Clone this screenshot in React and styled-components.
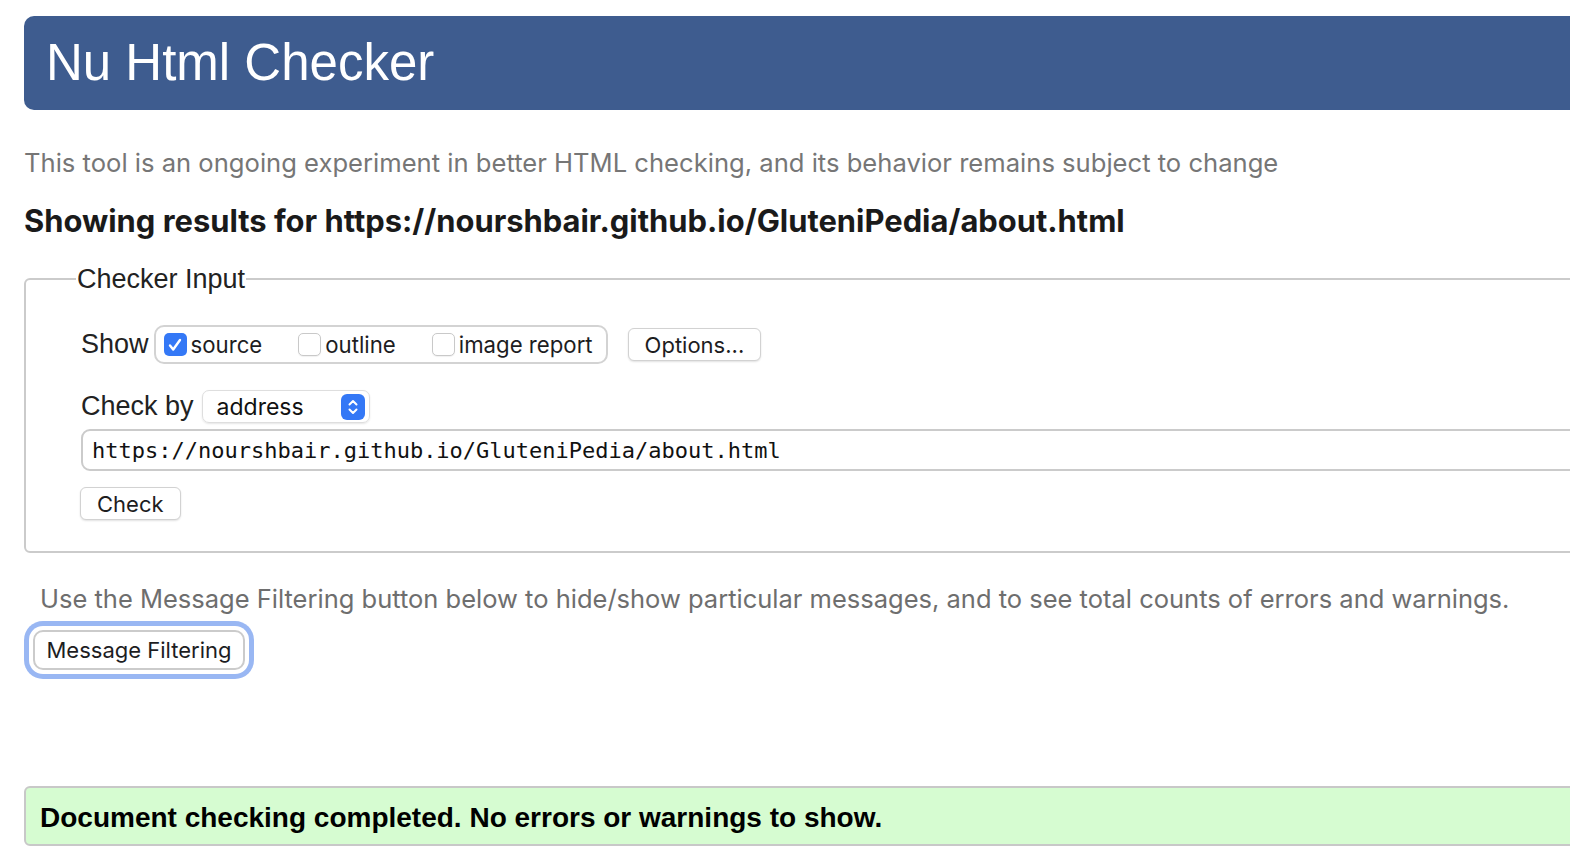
import React from "react";
import styled, { createGlobalStyle } from "styled-components";

const GlobalStyle = createGlobalStyle`
  html, body {
    margin: 0;
    padding: 0;
    background: #fff;
    overflow: hidden;
  }
  body {
    font-family: Inter, "Noto Sans", sans-serif;
    color: #1d1d1f;
  }
`;

const Page = styled.div`
  width: 1720px;
  padding: 16px 0 40px 24px;
`;

const Header = styled.h1`
  margin: 0;
  height: 94px;
  line-height: 94px;
  padding-left: 22px;
  background: #3e5c8f;
  border-radius: 10px;
  color: #fff;
  font-family: "Liberation Sans", Arial, sans-serif;
  font-weight: 400;
  font-size: 51px;
`;

const Intro = styled.p`
  margin: 38px 0 0;
  font-size: 25.6px;
  line-height: 30px;
  color: #767676;
`;

const Title = styled.h2`
  margin: 24px 0 0;
  font-size: 30.9px;
  line-height: 38px;
  font-weight: 700;
  color: #1a1a1a;
`;

const Fieldset = styled.fieldset`
  margin: 24px 0 0;
  border: 2px solid #cbcbcb;
  border-radius: 6px;
  padding: 0 0 31px 55px;
`;

const Legend = styled.legend`
  margin-left: -5px;
  padding: 0 1px;
  font-family: "Liberation Sans", Arial, sans-serif;
  font-size: 27px;
  line-height: 30px;
  color: #222;
`;

const Row = styled.div`
  display: flex;
  align-items: center;
  margin-top: ${(p) => p.$mt || 0}px;
`;

const FieldLabel = styled.span`
  font-family: "Liberation Sans", Arial, sans-serif;
  font-size: 27px;
  color: #222;
  margin-right: ${(p) => p.$mr || 8}px;
`;

const ChoiceGroup = styled.div`
  display: flex;
  align-items: center;
  gap: 36px;
  height: 39px;
  box-sizing: border-box;
  border: 2px solid #d3d3d3;
  border-radius: 10px;
  padding: 0 13px 0 8px;
`;

const Choice = styled.label`
  display: flex;
  align-items: center;
  gap: 4px;
  font-size: 22.2px;
  color: #1d1d1f;
`;

const Box = styled.span`
  display: inline-flex;
  align-items: center;
  justify-content: center;
  width: 23px;
  height: 23px;
  box-sizing: border-box;
  border-radius: 5px;
  background: ${(p) => (p.$checked ? "#3478f6" : "#fff")};
  border: ${(p) => (p.$checked ? "none" : "1px solid #c9c9c9")};
  box-shadow: ${(p) => (p.$checked ? "none" : "0 1px 1px rgba(0,0,0,0.06)")};
`;

const Button = styled.button`
  height: ${(p) => p.$h || 33}px;
  padding: 0 ${(p) => p.$px || 17}px;
  margin-left: ${(p) => p.$ml || 0}px;
  background: #fff;
  border: 1px solid #d2d2d2;
  border-radius: 6px;
  box-shadow: 0 1px 2px rgba(0, 0, 0, 0.12);
  font-family: Inter, "Noto Sans", sans-serif;
  font-size: 22px;
  color: #1d1d1f;
`;

const SelectBox = styled.div`
  display: flex;
  align-items: center;
  width: 168px;
  height: 33px;
  box-sizing: border-box;
  padding: 0 4px 0 14px;
  border: 1px solid #dedede;
  border-radius: 7px;
  box-shadow: 0 1px 2px rgba(0, 0, 0, 0.1);
  font-size: 23px;
  color: #111;
  span {
    flex: 1;
  }
`;

const UrlInput = styled.div`
  width: 1600px;
  height: 42px;
  box-sizing: border-box;
  margin-top: 6px;
  padding-left: 9px;
  display: flex;
  align-items: center;
  border: 2px solid #cbcbcb;
  border-radius: 9px;
  font-family: "DejaVu Sans Mono", "Liberation Mono", monospace;
  font-size: 22px;
  color: #111;
`;

const CheckRow = styled.div`
  margin-top: 16px;
  margin-left: -1px;
`;

const FilterNote = styled.p`
  margin: 31px 0 0 16px;
  font-size: 25.5px;
  line-height: 30px;
  color: #6e6e6e;
`;

const FilterButton = styled.button`
  display: block;
  margin: 16px 0 0 9px;
  width: 212px;
  height: 40px;
  background: #fff;
  border: 2px solid #cbcbcb;
  border-radius: 10px;
  box-shadow: 0 0 0 4px #fff, 0 0 0 9px #99b7f3;
  font-family: Inter, "Noto Sans", sans-serif;
  font-size: 22px;
  color: #1d1d1f;
`;

const Success = styled.div`
  margin-top: 116px;
  height: 60px;
  box-sizing: border-box;
  padding: 4px 0 0 14px;
  display: flex;
  align-items: center;
  background: #d6fcd1;
  border: 2px solid #c8c8c8;
  border-radius: 6px;
  font-family: "Liberation Sans", Arial, sans-serif;
  font-weight: 700;
  font-size: 28px;
  color: #000;
`;

const Tick = () => (
  <svg width="16" height="16" viewBox="0 0 16 16">
    <path d="M3 8.5l3.2 4L13 3" fill="none" stroke="#fff" strokeWidth="2.4" strokeLinecap="round" strokeLinejoin="round" />
  </svg>
);

const Stepper = () => (
  <svg width="24" height="26" viewBox="0 0 24 26">
    <rect width="24" height="26" rx="6" fill="#3478f6" />
    <path d="M8.5 10.5l3.5-3.5 3.5 3.5M8.5 15.5l3.5 3.5 3.5-3.5" fill="none" stroke="#fff" strokeWidth="2" strokeLinecap="round" strokeLinejoin="round" />
  </svg>
);

const choices = [
  { label: "source", checked: true },
  { label: "outline", checked: false },
  { label: "image report", checked: false },
];

export default function App() {
  return (
    <>
      <GlobalStyle />
      <Page>
        <Header>Nu Html Checker</Header>
        <Intro>
          This tool is an ongoing experiment in better HTML checking, and its behavior remains subject to change
        </Intro>
        <Title>Showing results for https://nourshbair.github.io/GluteniPedia/about.html</Title>
        <Fieldset>
          <Legend>Checker Input</Legend>
          <Row $mt={31}>
            <FieldLabel $mr={5}>Show</FieldLabel>
            <ChoiceGroup>
              {choices.map((c) => (
                <Choice key={c.label}>
                  <Box $checked={c.checked}>{c.checked && <Tick />}</Box>
                  {c.label}
                </Choice>
              ))}
            </ChoiceGroup>
            <Button $ml={20} $px={16}>Options...</Button>
          </Row>
          <Row $mt={26}>
            <FieldLabel>Check by</FieldLabel>
            <SelectBox>
              <span>address</span>
              <Stepper />
            </SelectBox>
          </Row>
          <UrlInput>https://nourshbair.github.io/GluteniPedia/about.html</UrlInput>
          <CheckRow>
            <Button $px={16}>Check</Button>
          </CheckRow>
        </Fieldset>
        <FilterNote>
          Use the Message Filtering button below to hide/show particular messages, and to see total counts of errors and warnings.
        </FilterNote>
        <FilterButton>Message Filtering</FilterButton>
        <Success>Document checking completed. No errors or warnings to show.</Success>
      </Page>
    </>
  );
}
